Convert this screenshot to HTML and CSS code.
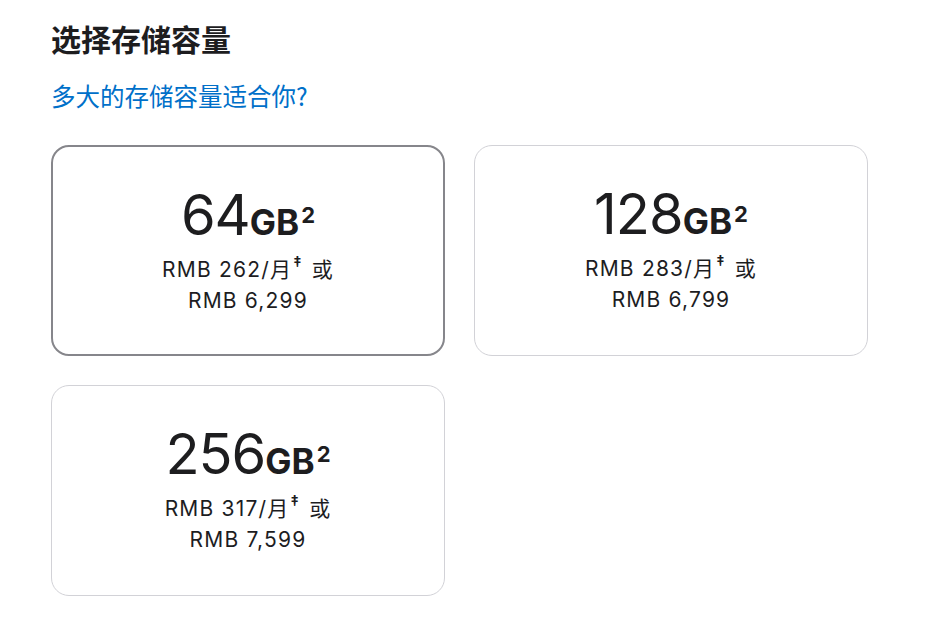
FILE: index.html
```html
<!DOCTYPE html>
<html lang="zh-CN">
  <head>
    <meta charset="UTF-8" />
    <meta name="viewport" content="width=device-width, initial-scale=1.0" />
    <title>选择存储容量</title>
    <link rel="stylesheet" href="styles.css">
  </head>
  <body>
    <div class="section">
      <h2 class="title">选择存储容量</h2>
      <a class="help" href="#">多大的存储容量适合你?</a>

      <div class="options">
        <div class="option option_selected">
          <div class="size">64<span class="unit">GB</span><sup class="note">2</sup></div>
          <div class="price">RMB 262/月<sup class="mark">‡</sup> 或</div>
          <div class="price">RMB 6,299</div>
        </div>
        <div class="option">
          <div class="size">128<span class="unit">GB</span><sup class="note">2</sup></div>
          <div class="price">RMB 283/月<sup class="mark">‡</sup> 或</div>
          <div class="price">RMB 6,799</div>
        </div>
        <div class="option">
          <div class="size">256<span class="unit">GB</span><sup class="note">2</sup></div>
          <div class="price">RMB 317/月<sup class="mark">‡</sup> 或</div>
          <div class="price">RMB 7,599</div>
        </div>
      </div>
    </div>
  </body>
</html>
```

FILE: styles.css
```css
body {
  margin: 0;
  background: #fff;
  color: #1d1d1f;
  font-family: Inter, "Noto Sans", "Noto Sans CJK SC", sans-serif;
}

.section {
  padding: 18px 0 0 51px;
}

.title {
  margin: 0;
  font-family: "Noto Sans CJK SC", sans-serif;
  font-size: 30px;
  font-weight: 700;
  line-height: 40px;
}

.help {
  display: block;
  margin-top: 22px;
  font-family: "Noto Sans CJK SC", sans-serif;
  font-size: 24.5px;
  line-height: 32px;
  color: #0070c9;
  text-decoration: none;
}

.options {
  display: grid;
  grid-template-columns: repeat(2, 394px);
  grid-auto-rows: 211px;
  gap: 29px;
  margin-top: 33px;
}

.option {
  box-sizing: border-box;
  border: 1.5px solid #d2d2d7;
  border-radius: 18px;
  display: flex;
  flex-direction: column;
  align-items: center;
  padding-top: 38px;
}

.option_selected {
  border: 2px solid #86868b;
}

/* объём памяти */
.size {
  font-size: 56px;
  font-weight: 400;
  line-height: 60px;
  letter-spacing: -1px;
  margin-bottom: 2px;
}

.unit {
  font-size: 35px;
  font-weight: 700;
  letter-spacing: 0;
}

.note {
  font-size: 22px;
  font-weight: 700;
  letter-spacing: 0;
  line-height: 0;
  vertical-align: 0;
  position: relative;
  top: -12px;
  margin-left: 2px;
}

.price {
  font-size: 21px;
  line-height: 31px;
  letter-spacing: 1.2px;
}

.mark {
  font-size: 15px;
  font-weight: 600;
  line-height: 0;
  vertical-align: 0;
  position: relative;
  top: -10px;
  margin-left: 1px;
  margin-right: 2px;
}
```
